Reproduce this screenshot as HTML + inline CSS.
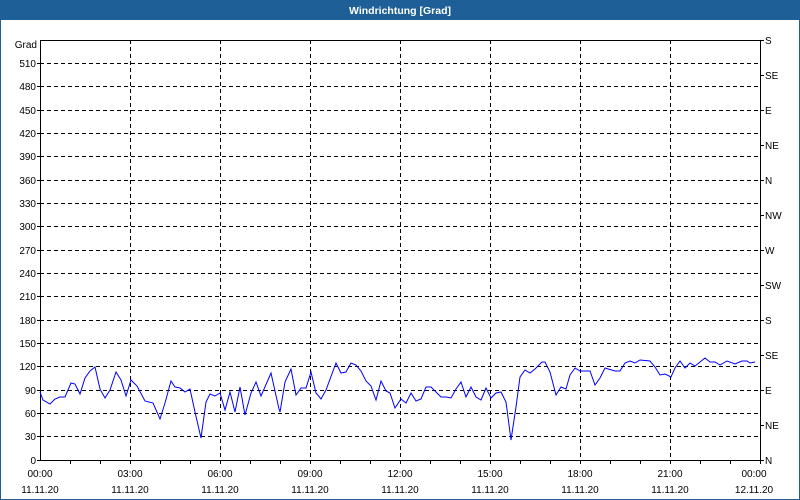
<!DOCTYPE html>
<html><head><meta charset="utf-8"><style>
html,body{margin:0;padding:0;background:#fff;}
svg{display:block;}
text{font-family:"Liberation Sans",sans-serif;font-size:10px;fill:#000;}
</style></head><body>
<svg width="800" height="500" xmlns="http://www.w3.org/2000/svg">
<rect x="0" y="0" width="800" height="500" fill="#fff"/>
<rect x="0.5" y="0.5" width="799" height="499" fill="none" stroke="#1d5f96" stroke-width="1"/>
<rect x="0" y="0" width="800" height="20" fill="#1d5f96"/>
<text x="400" y="14" text-anchor="middle" style="fill:#fff;font-weight:bold;font-size:10.5px">Windrichtung [Grad]</text>
<g stroke="#000" stroke-width="1" stroke-dasharray="4,3" fill="none">
<path d="M40 63.5H760M40 86.5H760M40 110.5H760M40 133.5H760M40 156.5H760M40 180.5H760M40 203.5H760M40 226.5H760M40 250.5H760M40 273.5H760M40 296.5H760M40 320.5H760M40 343.5H760M40 366.5H760M40 390.5H760M40 413.5H760M40 436.5H760"/>
<path d="M130.5 40V460M220.5 40V460M310.5 40V460M400.5 40V460M490.5 40V460M580.5 40V460M670.5 40V460"/>
</g>
<g stroke="#000" stroke-width="1" fill="none">
<path d="M40.5 40V461M40 40.5H760.5M760.5 40V461M40 460.5H761"/>
<path d="M70.5 461v3M100.5 461v3M130.5 461v3M160.5 461v3M190.5 461v3M220.5 461v3M250.5 461v3M280.5 461v3M310.5 461v3M340.5 461v3M370.5 461v3M400.5 461v3M430.5 461v3M460.5 461v3M490.5 461v3M520.5 461v3M550.5 461v3M580.5 461v3M610.5 461v3M640.5 461v3M670.5 461v3M700.5 461v3M730.5 461v3M760.5 461v3"/>
<path d="M761 40.5h3M761 75.5h3M761 110.5h3M761 145.5h3M761 180.5h3M761 215.5h3M761 250.5h3M761 285.5h3M761 320.5h3M761 355.5h3M761 390.5h3M761 425.5h3M761 460.5h3M37 63.5h3M37 86.5h3M37 110.5h3M37 133.5h3M37 156.5h3M37 180.5h3M37 203.5h3M37 226.5h3M37 250.5h3M37 273.5h3M37 296.5h3M37 320.5h3M37 343.5h3M37 366.5h3M37 390.5h3M37 413.5h3M37 436.5h3M37 460.5h3"/>
</g>
<g text-anchor="end">
<text x="37" y="48">Grad</text>
<text x="36" y="67">510</text><text x="36" y="90">480</text><text x="36" y="114">450</text><text x="36" y="137">420</text><text x="36" y="160">390</text><text x="36" y="184">360</text><text x="36" y="207">330</text><text x="36" y="230">300</text><text x="36" y="254">270</text><text x="36" y="277">240</text><text x="36" y="300">210</text><text x="36" y="324">180</text><text x="36" y="347">150</text><text x="36" y="370">120</text><text x="36" y="394">90</text><text x="36" y="417">60</text><text x="36" y="440">30</text><text x="36" y="464">0</text>
</g>
<g>
<text x="765" y="44">S</text><text x="765" y="79">SE</text><text x="765" y="114">E</text><text x="765" y="149">NE</text><text x="765" y="184">N</text><text x="765" y="219">NW</text><text x="765" y="254">W</text><text x="765" y="289">SW</text><text x="765" y="324">S</text><text x="765" y="359">SE</text><text x="765" y="394">E</text><text x="765" y="429">NE</text><text x="765" y="464">N</text>
</g>
<g text-anchor="middle">
<text x="40" y="477">00:00</text><text x="130" y="477">03:00</text><text x="220" y="477">06:00</text><text x="310" y="477">09:00</text><text x="400" y="477">12:00</text><text x="490" y="477">15:00</text><text x="580" y="477">18:00</text><text x="670" y="477">21:00</text><text x="754" y="477">00:00</text>
<text x="40" y="493">11.11.20</text><text x="130" y="493">11.11.20</text><text x="220" y="493">11.11.20</text><text x="310" y="493">11.11.20</text><text x="400" y="493">11.11.20</text><text x="490" y="493">11.11.20</text><text x="580" y="493">11.11.20</text><text x="670" y="493">11.11.20</text><text x="754" y="493">12.11.20</text>
</g>
<polyline fill="none" stroke="#0000ff" stroke-width="1" points="40,392 43,400 50,404 55,399 60,397 65,397 71,383 75,384 80,394 85,378 90,371 95,367 100,389 105,398 110,390 116,372 121,380 126,396 131,380 137,386 145,401 153,403 160,419 165,403 171,381 175,387 180,388 185,392 190,389 195,412 201,438 206,402 210,394 215,396 220,393 225,410 230,392 235,412 240,387 245,415 251,393 256,382 261,396 271,373 279,409 280,412 285,382 291,369 296,395 301,388 306,388 311,372 316,393 321,399 326,390 336,363 341,373 346,372 351,363 356,365 361,371 366,381 371,386 376,400 381,381 386,391 390,393 395,408 401,399 406,403 411,393 416,401 421,399 426,387 431,387 441,397 446,397 451,398 456,389 461,382 466,397 471,387 476,397 481,400 486,388 491,398 496,393 501,392 506,402 511,440 516,407 520,377 525,370 530,373 535,369 542,362 545,362 550,372 556,395 561,387 566,389 570,375 575,368 580,371 590,371 595,385 600,378 605,368 615,371 620,371 625,363 630,361 635,363 640,360 650,361 655,367 660,375 665,374 671,377 675,368 680,361 685,368 690,363 695,366 705,358 710,362 715,362 720,365 727,361 735,364 742,361 747,361 750,363 755,362"/>
</svg>
</body></html>
